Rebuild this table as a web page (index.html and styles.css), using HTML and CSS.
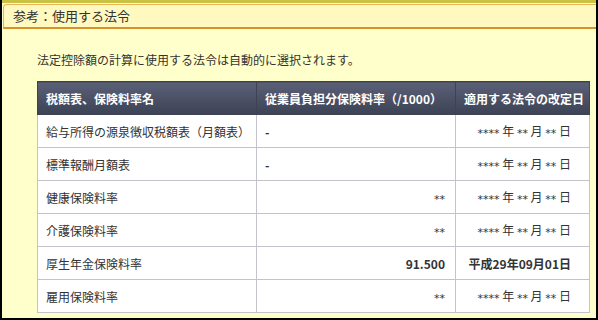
FILE: index.html
```html
<!DOCTYPE html>
<html lang="ja">
<head>
<meta charset="utf-8">
<link rel="stylesheet" href="styles.css">
</head>
<body>
<div class="frame">
  <div class="title">参考：使用する法令</div>
  <div class="content">
    <p class="desc">法定控除額の計算に使用する法令は自動的に選択されます。</p>
    <table class="laws">
      <colgroup>
        <col class="c1"><col class="c2"><col class="c3">
      </colgroup>
      <thead>
        <tr><th>税額表、保険料率名</th><th>従業員負担分保険料率（/1000）</th><th>適用する法令の改定日</th></tr>
      </thead>
      <tbody>
        <tr><td>給与所得の源泉徴収税額表（月額表）</td><td class="dash">-</td><td class="date"><span class="ast">****</span> 年 <span class="ast">**</span> 月 <span class="ast">**</span> 日</td></tr>
        <tr><td>標準報酬月額表</td><td class="dash">-</td><td class="date"><span class="ast">****</span> 年 <span class="ast">**</span> 月 <span class="ast">**</span> 日</td></tr>
        <tr><td>健康保険料率</td><td class="num"><span class="ast">**</span></td><td class="date"><span class="ast">****</span> 年 <span class="ast">**</span> 月 <span class="ast">**</span> 日</td></tr>
        <tr><td>介護保険料率</td><td class="num"><span class="ast">**</span></td><td class="date"><span class="ast">****</span> 年 <span class="ast">**</span> 月 <span class="ast">**</span> 日</td></tr>
        <tr><td>厚生年金保険料率</td><td class="num val">91.500</td><td class="date val">平成29年09月01日</td></tr>
        <tr><td>雇用保険料率</td><td class="num"><span class="ast">**</span></td><td class="date"><span class="ast">****</span> 年 <span class="ast">**</span> 月 <span class="ast">**</span> 日</td></tr>
      </tbody>
    </table>
  </div>
</div>
</body>
</html>
```
FILE: styles.css
```css
html, body {
  margin: 0;
  padding: 0;
}
body {
  width: 598px;
  height: 320px;
  background: #000;
  font-family: "Noto Sans CJK JP", "Noto Sans", sans-serif;
  color: #333;
  overflow: hidden;
}
.frame {
  margin: 0 2px;
  height: 318px;
  box-sizing: border-box;
  background: #ffffcc;
  border-top: 3px solid #c9c244;
}
.title {
  height: 25px;
  box-sizing: border-box;
  margin: 1px 0 0 1px;
  padding-left: 9px;
  background: #fff9c0;
  border: 1px solid #e6b454;
  border-right: none;
  border-bottom: 2px solid #d8922a;
  border-radius: 4px 0 0 0;
  font-size: 13px;
  line-height: 22px;
  color: #333;
}
.content {
  padding-left: 35px;
}
.desc {
  margin: 23px 0 0;
  font-size: 12px;
  line-height: 16px;
}
.laws {
  margin-top: 13px;
  width: 552px;
  border-collapse: collapse;
  table-layout: fixed;
  font-size: 12px;
}
.c1 { width: 219px; }
.c2 { width: 199px; }
.c3 { width: 134px; }
.laws th {
  height: 32px;
  padding: 0 8px;
  text-align: left;
  font-weight: bold;
  color: #fff;
  background: linear-gradient(#5a6076, #3d4255);
  border: 1px solid #3d4255;
  border-left-color: #6f748a;
  white-space: nowrap;
}
.laws th:first-child {
  border-left-color: #3d4255;
}
.laws td {
  height: 32px;
  padding: 0 8px;
  background: #fff;
  border: 1px solid #c3c3cb;
  white-space: nowrap;
}
.laws td.dash {
  font-weight: bold;
}
.laws td.num {
  text-align: right;
  padding-right: 10px;
}
.laws td.date {
  text-align: right;
  padding-right: 18px;
}
.laws td.val {
  font-weight: bold;
}
.ast {
  font-family: "DejaVu Sans", sans-serif;
  font-size: 11px;
  vertical-align: -1px;
}
```
